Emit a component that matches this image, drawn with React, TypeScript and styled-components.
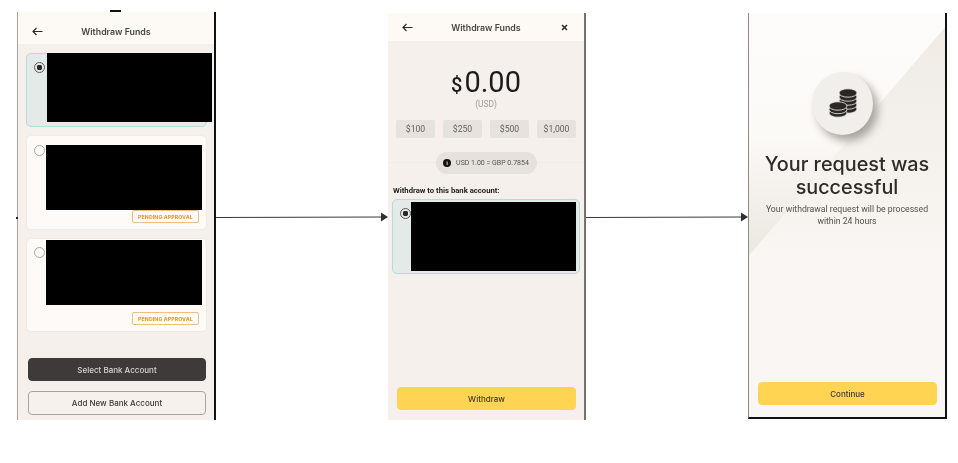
import React from "react";
import styled, { createGlobalStyle } from "styled-components";

const Global = createGlobalStyle`
  html, body { margin: 0; padding: 0; background: #fff; }
  * { box-sizing: border-box; }
  body { font-family: "Inter", "Liberation Sans", sans-serif; color: #38332f; }
`;

const Page = styled.div`
  width: 958px;
  height: 463px;
  padding: 12px 0 0 17px;
  display: flex;
  align-items: flex-start;
  overflow: hidden;
  background: #fff;
  filter: blur(0.3px);
`;

const Phone = styled.section<{ $w: number; $h: number; $top?: number }>`
  width: ${(p) => p.$w}px;
  height: ${(p) => p.$h}px;
  margin-top: ${(p) => p.$top ?? 0}px;
  flex: none;
  background: #f5f0ec;
  display: flex;
  flex-direction: column;
  position: relative;
`;

const AccountsPhone = styled(Phone)`
  border-left: 1px solid #a8a39e;
  border-right: 2px solid #111;
`;

const AmountPhone = styled(Phone)`
  border-right: 2px solid #77726e;
`;

const DonePhone = styled(Phone)`
  border-left: 1px solid #8e8a86;
  border-right: 2px solid #111;
  border-bottom: 2px solid #111;
  background: linear-gradient(180deg, #efeae4 0%, #f9f6f3 62%, #f9f6f3 100%);
  align-items: center;
  &::before {
    content: "";
    position: absolute;
    inset: 0;
    clip-path: polygon(0 0, 100% 0, 100% 3.5%, 0 60%);
    background: linear-gradient(180deg, #fefcfa 0%, #fcfaf7 30%, #ebe7e1 60%);
  }
`;

const Notch = styled.div`
  position: absolute;
  top: -2px;
  left: 92px;
  width: 11px;
  height: 5px;
  background: #111;
  border-radius: 0 0 6px 6px / 0 0 4px 4px;
`;

const Header = styled.header<{ $h: number; $pad: number; $shift?: number }>`
  height: ${(p) => p.$h}px;
  flex: none;
  background: #fdfaf6;
  display: flex;
  align-items: center;
  justify-content: space-between;
  padding: ${(p) => p.$shift ?? 0}px ${(p) => p.$pad}px 0;
  position: relative;
`;

const HeaderTitle = styled.h1`
  position: absolute;
  left: 0;
  right: 0;
  margin: 0;
  text-align: center;
  font-size: 8.8px;
  font-weight: 600;
  color: #4a4541;
`;

const IconSlot = styled.span`
  display: flex;
  width: 11px;
  height: 11px;
  color: #2c2825;
`;

const CardList = styled.div`
  display: flex;
  flex-direction: column;
  padding: 9px 7px 0 8px;
  gap: 8px;
`;

const Card = styled.div<{ $h: number; $selected?: boolean; $padTop: number; $col: number }>`
  height: ${(p) => p.$h}px;
  border-radius: 5px;
  border: ${(p) => (p.$selected ? "1.5px solid #b4dcdc" : "1px solid #f1ebe6")};
  background: ${(p) => (p.$selected ? "#e3eae7" : "#fdfaf8")};
  padding: ${(p) => p.$padTop}px 0 0 7px;
  display: grid;
  grid-template-columns: ${(p) => p.$col}px auto;
  align-content: start;
  justify-content: start;
`;

const Radio = styled.span<{ $on?: boolean; $top?: number }>`
  width: 11px;
  height: 11px;
  border-radius: 50%;
  border: 1px solid ${(p) => (p.$on ? "#5d5956" : "#aaa5a1")};
  background: ${(p) => (p.$on ? "radial-gradient(circle, #2b2825 0 2.6px, transparent 3px)" : "transparent")};
  margin-top: ${(p) => p.$top ?? 0}px;
`;

const Redaction = styled.div<{ $w: number; $h: number; $up?: number }>`
  width: ${(p) => p.$w}px;
  height: ${(p) => p.$h}px;
  margin-top: ${(p) => -(p.$up ?? 0)}px;
  background: #000;
  position: relative;
`;

const Badge = styled.span<{ $gap: number }>`
  grid-column: 2;
  justify-self: end;
  margin: ${(p) => p.$gap}px 3px 0 0;
  width: 67px;
  height: 13px;
  border: 1px solid #efbe7c;
  border-radius: 2px;
  background: #fefcf9;
  color: #e69d38;
  font-size: 5.2px;
  font-weight: 800;
  display: flex;
  align-items: center;
  justify-content: center;
  letter-spacing: 0.1px;
`;

const ButtonStack = styled.div`
  margin-top: auto;
  padding: 0 8px 5px 10px;
  display: flex;
  flex-direction: column;
  gap: 10px;
`;

const ActionButton = styled.button<{ $kind: "dark" | "outline" | "yellow" }>`
  height: ${(p) => (p.$kind === "outline" ? 24 : 23)}px;
  width: 100%;
  flex: none;
  border-radius: 4px;
  font: 500 8px "Inter", "Liberation Sans", sans-serif;
  padding: 0;
  border: 1px solid
    ${(p) => (p.$kind === "dark" ? "#3d3a39" : p.$kind === "outline" ? "#a9a5a1" : "#ffd452")};
  background: ${(p) => (p.$kind === "dark" ? "#3d3a39" : p.$kind === "outline" ? "#f6f1ed" : "#ffd452")};
  color: ${(p) => (p.$kind === "dark" ? "#d8d5d2" : "#3d3833")};
`;

const Amount = styled.div`
  margin-top: 23px;
  display: flex;
  justify-content: center;
  align-items: baseline;
  font-family: "Roboto", sans-serif;
  color: #1e1c1b;
  line-height: 36px;
  font-size: 29px;
`;

const Currency = styled.span`
  font-size: 20px;
  font-weight: 500;
  margin-right: 2px;
`;

const CurrencyNote = styled.div`
  text-align: center;
  font: 8.4px/10px "Roboto", sans-serif;
  color: #a09c98;
  margin-top: -4px;
`;

const Chips = styled.div`
  margin: 11px 8px 0;
  display: grid;
  grid-template-columns: repeat(4, 39px);
  justify-content: space-between;
`;

const Chip = styled.span`
  height: 18px;
  background: #e6e2de;
  border-radius: 2px;
  color: #65615d;
  font: 8.6px "Roboto", sans-serif;
  display: flex;
  align-items: center;
  justify-content: center;
`;

const RateRow = styled.div`
  margin-top: 14px;
  height: 22px;
  display: flex;
  justify-content: center;
  position: relative;
  &::before {
    content: "";
    position: absolute;
    left: 0;
    right: 0;
    top: 10px;
    height: 1px;
    background: #efebe7;
  }
`;

const RatePill = styled.div`
  position: relative;
  width: 101px;
  border-radius: 11px;
  background: #e5e1dd;
  display: flex;
  align-items: center;
  justify-content: center;
  gap: 5px;
  font: 7px "Roboto", sans-serif;
  color: #56524e;
  white-space: nowrap;
`;

const InfoDot = styled.span`
  width: 8px;
  height: 8px;
  flex: none;
  border-radius: 50%;
  background: #141210;
  color: #e5e1dd;
  font: 700 6px/8px "Liberation Sans", sans-serif;
  text-align: center;
`;

const SectionLabel = styled.div`
  margin: 11px 0 3px 5px;
  font: 700 7.7px/11px "Roboto", sans-serif;
  color: #1f1d1b;
  white-space: nowrap;
`;

const SingleCard = styled.div`
  margin: 0 4px 0 4px;
  height: 75px;
  border-radius: 5px;
  border: 1.5px solid #b4dcdc;
  background: #e3eae7;
  padding: 2px 0 0 7px;
  display: flex;
`;

const SingleRadio = styled(Radio)`
  flex: none;
`;

const BottomAction = styled.div<{ $pad: string }>`
  margin-top: auto;
  padding: ${(p) => p.$pad};
  width: 100%;
  position: relative;
`;

const Coin = styled.div`
  position: relative;
  margin: 59px 9px 0 0;
  width: 61px;
  height: 63px;
  flex: none;
  border-radius: 50%;
  background: #f1efec;
  box-shadow: 5px 6px 9px #a9a49f;
  display: flex;
  align-items: center;
  justify-content: center;
`;

const SuccessTitle = styled.h2`
  position: relative;
  margin: 18px 0 0;
  text-align: center;
  font-size: 19.8px;
  line-height: 23px;
  font-weight: 500;
  color: #2f2b28;
`;

const SuccessNote = styled.p`
  position: relative;
  margin: 5px 0 0;
  text-align: center;
  font: 8.7px/11.5px "Roboto", sans-serif;
  color: #55514d;
`;

const Connector = styled.svg<{ $w: number }>`
  width: ${(p) => p.$w}px;
  height: 24px;
  margin-top: 193px;
  flex: none;
  display: block;
`;

const Tick = styled.i`
  position: absolute;
  left: -2px;
  top: 205px;
  width: 2px;
  height: 2px;
  background: #222;
`;

const Back = () => (
  <IconSlot>
    <svg viewBox="0 0 11 11" width="11" height="11" fill="none" stroke="currentColor" strokeWidth="1.2">
      <path d="M10.5 5.5H1M4.5 2 1 5.5 4.5 9" />
    </svg>
  </IconSlot>
);

const Close = () => (
  <IconSlot>
    <svg viewBox="0 0 11 11" width="11" height="11" fill="none" stroke="currentColor" strokeWidth="1.5">
      <path d="M3 3l5 5M8 3 3 8" />
    </svg>
  </IconSlot>
);

const CoinStack = ({ x, top, step, rows }: { x: number; top: number; step: number; rows: number }) => (
  <g fill="#2a2725">
    {Array.from({ length: rows }).map((_, i) => (
      <ellipse key={i} cx={x} cy={top + (rows - 1 - i) * step} rx="9" ry="4.2" stroke="#f1efec" strokeWidth="0.8" />
    ))}
  </g>
);

const Arrow = ({ w, sy, ey }: { w: number; sy: number; ey: number }) => (
  <Connector $w={w} viewBox={`0 0 ${w} 24`}>
    <path d={`M0 ${sy}L${w - 6} ${ey}`} stroke="#3a3a3a" strokeWidth="1" fill="none" />
    <path d={`M${w - 7} ${ey - 4.5}L${w} ${ey}L${w - 7} ${ey + 4.5}Z`} fill="#2f2f2f" />
  </Connector>
);

export default function App() {
  return (
    <>
      <Global />
      <Page>
        <AccountsPhone $w={199} $h={408}>
          <Notch />
          <Tick />
          <Header $h={32} $pad={14} $shift={6}>
            <Back />
            <HeaderTitle>Withdraw Funds</HeaderTitle>
          </Header>
          <CardList>
            <Card $h={74} $selected $padTop={0} $col={13}>
              <Radio $on $top={8} />
              <Redaction $w={165} $h={69} $up={1} />
            </Card>
            <Card $h={95} $padTop={9} $col={12}>
              <Radio />
              <Redaction $w={156} $h={65} />
              <Badge $gap={0}>PENDING APPROVAL</Badge>
            </Card>
            <Card $h={94} $padTop={1} $col={12}>
              <Radio $top={7} />
              <Redaction $w={156} $h={65} />
              <Badge $gap={7}>PENDING APPROVAL</Badge>
            </Card>
          </CardList>
          <ButtonStack>
            <ActionButton $kind="dark">Select Bank Account</ActionButton>
            <ActionButton $kind="outline">Add New Bank Account</ActionButton>
          </ButtonStack>
        </AccountsPhone>

        <Arrow w={172} sy={12.5} ey={12} />

        <AmountPhone $w={198} $h={407} $top={1}>
          <Header $h={28} $pad={14}>
            <Back />
            <HeaderTitle>Withdraw Funds</HeaderTitle>
            <Close />
          </Header>
          <Amount>
            <Currency>$</Currency>0.00
          </Amount>
          <CurrencyNote>(USD)</CurrencyNote>
          <Chips>
            <Chip>$100</Chip>
            <Chip>$250</Chip>
            <Chip>$500</Chip>
            <Chip>$1,000</Chip>
          </Chips>
          <RateRow>
            <RatePill>
              <InfoDot>i</InfoDot>
              USD 1.00 = GBP 0.7854
            </RatePill>
          </RateRow>
          <SectionLabel>Withdraw to this bank account:</SectionLabel>
          <SingleCard>
            <SingleRadio $on $top={6} />
            <Redaction $w={165} $h={69} />
          </SingleCard>
          <BottomAction $pad="0 8px 10px 9px">
            <ActionButton $kind="yellow">Withdraw</ActionButton>
          </BottomAction>
        </AmountPhone>

        <Arrow w={162} sy={12.5} ey={12} />

        <DonePhone $w={199} $h={406} $top={1}>
          <Coin>
            <svg width="61" height="63" viewBox="0 0 61 63">
              <CoinStack x={36} top={21} step={4} rows={5} />
              <CoinStack x={26} top={34} step={3.5} rows={3} />
            </svg>
          </Coin>
          <SuccessTitle>
            Your request was
            <br />
            successful
          </SuccessTitle>
          <SuccessNote>
            Your withdrawal request will be processed
            <br />
            within 24 hours
          </SuccessNote>
          <BottomAction $pad="0 8px 12px 9px">
            <ActionButton $kind="yellow">Continue</ActionButton>
          </BottomAction>
        </DonePhone>
      </Page>
    </>
  );
}
